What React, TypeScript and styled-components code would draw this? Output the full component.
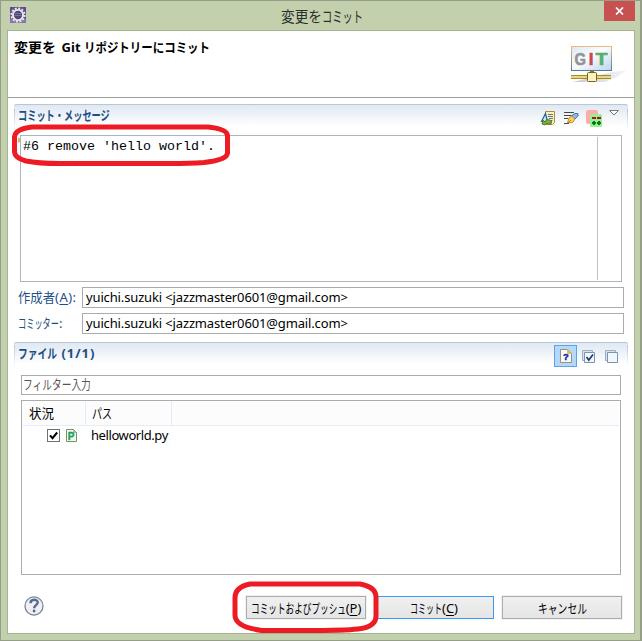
import React from "react";
import styled, { createGlobalStyle } from "styled-components";

const GlobalStyle = createGlobalStyle`
  * { box-sizing: border-box; }
  body { margin: 0; overflow: hidden; }
`;

const Frame = styled.div`
  position: relative;
  width: 642px;
  height: 641px;
  display: flex;
  flex-direction: column;
  background: #c3d0ad;
  border: 1px solid #959e86;
  border-right-width: 2px;
  font: 13px/18px "Noto Sans", "Noto Sans CJK JP", sans-serif;
  color: #000;
`;

const TitleBar = styled.header`
  height: 29px;
  flex: none;
  display: grid;
  grid-template-columns: 48px 1fr 48px;
  padding-left: 6px;
  svg { display: block; }
`;

const AppIcon = styled.div`
  padding: 6px 0 0 3px;
`;

const Title = styled.h1`
  margin: 0;
  padding: 4px 0 0 226px;
  font-size: 15px;
  line-height: 22px;
  font-weight: 400;
  color: #2a2f2a;
`;

const CloseButton = styled.button`
  width: 31px;
  height: 20px;
  margin-left: 12px;
  padding: 0;
  border: 0;
  background: #c75050;
  display: grid;
  place-items: center;
  justify-self: start;
`;

const Client = styled.main`
  width: 628px;
  height: 604px;
  margin-left: 6px;
  display: flex;
  flex-direction: column;
  background: #fff;
  border: 1px solid #a7b491;
`;

const Banner = styled.div`
  height: 67px;
  flex: none;
  display: flex;
  justify-content: space-between;
  border-bottom: 1px solid #a0a0a0;
`;

const BannerTitle = styled.h2`
  margin: 6px 0 0 6px;
  font-size: 13px;
  line-height: 20px;
  font-weight: 700;
`;

const BannerArt = styled.div`
  padding: 13px 6px 0 0;
`;

const SectionBar = styled.div<{ $top: number; $h: number }>`
  height: ${(p) => p.$h}px;
  flex: none;
  margin: ${(p) => p.$top}px 5px 0 5px;
  display: flex;
  justify-content: space-between;
  border: 1px solid transparent;
  border-top-color: #b5c7d9;
  border-bottom: 0;
  border-radius: 4px 4px 0 0;
  background:
    linear-gradient(#b5c7d9, #fff) left / 1px 22px no-repeat,
    linear-gradient(#b5c7d9, #fff) right / 1px 22px no-repeat,
    linear-gradient(#e0e8f2, #fff 21px) no-repeat;
`;

const SectionTitle = styled.h3`
  margin: 0;
  padding-left: 4px;
  font-size: 13px;
  line-height: 19px;
  font-weight: 700;
  color: #1c4f86;
`;

const Tools = styled.div<{ $gap: number; $right: number; $top: number }>`
  display: flex;
  align-items: flex-start;
  gap: ${(p) => p.$gap}px;
  padding: ${(p) => p.$top}px ${(p) => p.$right}px 0 0;
  svg { display: block; }
`;

const ToggleButton = styled.div`
  width: 23px;
  height: 22px;
  display: grid;
  place-items: center;
  border: 1px solid #5ba2e6;
  background: #b5d7f8;
  margin-right: 1px;
`;

const MessageBox = styled.div`
  width: 602px;
  height: 147px;
  flex: none;
  margin: 0 0 0 12px;
  padding: 1px 23px 1px 2px;
  border: 1px solid #abb5c0;
  display: flex;
`;

const MessageText = styled.div`
  flex: 1;
  padding-top: 1px;
  border-right: 1px solid #c0c0c0;
  font: 13.33px/18px "Liberation Mono", monospace;
  white-space: pre;
`;

const Field = styled.div<{ $top: number }>`
  display: grid;
  grid-template-columns: 64px 542px;
  flex: none;
  height: 21px;
  margin: ${(p) => p.$top}px 0 0 10px;
`;

const FieldLabel = styled.label`
  color: #1c4f86;
  line-height: 20px;
  white-space: nowrap;
`;

const FieldValue = styled.div`
  border: 1px solid #ababab;
  padding-left: 3px;
  line-height: 19px;
  font-size: 13px;
  white-space: nowrap;
`;

const FilterBox = styled.div`
  width: 600px;
  height: 20px;
  flex: none;
  margin: 6px 0 0 13px;
  border: 1px solid #ababab;
  padding-left: 1px;
  line-height: 16px;
  color: #555;
`;

const Table = styled.div`
  width: 600px;
  height: 175px;
  flex: none;
  margin: 5px 0 0 13px;
  padding: 1px;
  border: 1px solid #a9acb3;
`;

const TableHead = styled.div`
  display: grid;
  grid-template-columns: 63px 86px 1fr;
  height: 24px;
  border-bottom: 1px solid #e4edf9;
  background: #fcfcfc;
`;

const HeadCell = styled.div`
  padding-left: 6px;
  line-height: 22px;
  border-right: 1px solid #e1ecf9;
  &:last-child { border-right: 0; }
`;

const Row = styled.div`
  display: grid;
  grid-template-columns: 19px 25px 1fr;
  padding: 0 0 1px 24px;
  height: 18px;
  line-height: 16px;
  align-items: center;
  svg { display: block; margin-top: 1px; }
`;

const Footer = styled.footer`
  display: flex;
  align-items: flex-start;
  padding: 21px 0 0 16px;
  flex: 1;
`;

const Buttons = styled.div`
  display: flex;
  gap: 8px;
  margin-left: 202px;
`;

const PushButton = styled.button<{ $primary?: boolean }>`
  width: 120px;
  height: 23px;
  padding: 0;
  display: flex;
  align-items: center;
  justify-content: center;
  border: 1px solid ${(p) => (p.$primary ? "#3c98f0" : "#acacac")};
  box-shadow: ${(p) => (p.$primary ? "none" : "0 0 0 1px #f2f2f2")};
  background: linear-gradient(#f0f0f0, #e5e5e5);
  font: 13px/20px "Noto Sans", "Noto Sans CJK JP", sans-serif;
  color: #000;
  white-space: nowrap;
`;

/* Narrow UI lettering: squeezes full-width glyphs into a given width. */
const Narrow = styled.span<{ $w: number; $scale: number }>`
  display: inline-block;
  width: ${(p) => p.$w}px;
  white-space: nowrap;
  text-align: left;
  font-family: "Noto Sans CJK JP", sans-serif;
  line-height: inherit;
  vertical-align: baseline;
  transform: scaleX(${(p) => p.$scale});
  transform-origin: 0 50%;
`;

const Latin = styled.span<{ $ls?: number; $left?: number }>`
  letter-spacing: ${(p) => p.$ls ?? 0}px;
  margin-left: ${(p) => p.$left ?? 0}px;
`;

const Key = styled.span`
  text-decoration: underline;
  text-underline-offset: 2px;
`;

const Overlay = styled.svg`
  position: absolute;
  left: -1px;
  top: -1px;
  pointer-events: none;
`;

function Kana({ text, w, size = 13 }: { text: string; w: number; size?: number }) {
  return (
    <Narrow $w={w} $scale={w / (text.length * size)}>
      {text}
    </Narrow>
  );
}

const GearIcon = () => (
  <svg width="16" height="16" viewBox="0 0 16 16">
    <rect width="16" height="16" fill="#604b91" />
    <path d="M0 12h16v4H0z" fill="#8775b0" />
    <circle cx="8" cy="8" r="6.6" fill="none" stroke="#e8e6e4" strokeWidth="2" strokeDasharray="2 1.455" />
    <circle cx="8" cy="8" r="5.1" fill="#4d4878" stroke="#e8e6e4" strokeWidth="1.9" />
    <path d="M4.500 6.5h7M4.300 8.5h7.400" stroke="#8580a6" strokeWidth=".8" />
  </svg>
);

const GitArt = () => (
  <svg width="58" height="42" viewBox="0 0 58 42">
    <defs>
      <linearGradient id="board" x2="1" y2="1">
        <stop offset="0" stopColor="#dbe7f4" />
        <stop offset=".45" stopColor="#fafcff" />
        <stop offset="1" stopColor="#bcd3ec" />
      </linearGradient>
      <linearGradient id="edge" x2="0" y2="1">
        <stop offset="0" stopColor="#edbb82" />
        <stop offset="1" stopColor="#537d91" />
      </linearGradient>
      <linearGradient id="shade">
        <stop offset="0" stopColor="#bcb8c6" />
        <stop offset="1" stopColor="#f4f3f7" />
      </linearGradient>
    </defs>
    <path d="M3 38L42 28l15-2-10 7-12 5z" fill="url(#shade)" opacity=".8" />
    <rect x="1.5" y="2.5" width="40" height="24" fill="url(#board)" stroke="url(#edge)" />
    <g fontFamily="Liberation Sans" fontWeight="700" fontSize="17" strokeWidth=".6">
      <text x="4.500" y="21" fill="#949494" stroke="#949494" textLength="11.500" lengthAdjust="spacingAndGlyphs">G</text>
      <text x="18.700" y="21" fill="#c44b50" stroke="#c44b50">I</text>
      <text x="25.500" y="21" fill="#58ad68" stroke="#58ad68" textLength="12" lengthAdjust="spacingAndGlyphs">T</text>
    </g>
    <path d="M20 27h4v3h-4z" fill="#8c7a29" />
    <path d="M1 31h40v4H1z" fill="#ead878" />
    <path d="M1 31.5h40M1 34.5h40" stroke="#a58c2e" />
    <rect x="17.5" y="28.5" width="9" height="9" rx="1" fill="#fff2bd" stroke="#79631c" />
  </svg>
);

const AmendIcon = () => (
  <svg width="16" height="16" viewBox="0 0 16 16">
    <path d="M5.5 1.5h9v11l-2 2h-7z" fill="#fff1b8" stroke="#b58b31" />
    <path d="M8 4.5h5M8 6.5h5M9 8.5h4" stroke="#56759d" />
    <path d="M1.5 11.5l4-8 2 8z" fill="#c9e7fb" stroke="#20619c" strokeWidth="1.2" />
    <path d="M2 14l1-4 2 2c1-3 4-3 6-1l1-1-1 4H8l-1-1-2 2z" fill="#7aae35" stroke="#37701f" strokeWidth=".8" />
  </svg>
);

const SignIcon = () => (
  <svg width="16" height="16" viewBox="0 0 16 16">
    <path d="M1 2.5h10M1 5.5h9M1 8.5h4M1 13.5h5" stroke="#454545" />
    <path d="M8 6l4-2.500h3V6l-4 4z" fill="#8bb7ec" stroke="#4978b4" />
    <path d="M4.500 13l1.500-5 2.500-2 3.500 3-2.500 3.500z" fill="#ffd25c" stroke="#c58a2b" />
    <path d="M5 13l3-3" stroke="#7b642c" strokeWidth=".7" />
  </svg>
);

const ChangeIdIcon = () => (
  <svg width="16" height="17" viewBox="0 0 16 17">
    <rect x="0" y="0" width="12" height="14" rx="2.500" fill="#ffabab" />
    <rect x="4" y="4" width="12" height="13" rx="1.500" fill="#93f193" />
    <path d="M6 7h4v2H6zM11 7h4v2h-4z" fill="#b30f1d" />
    <path d="M6 12h4v2H6zM7 11h2v4H7zM11 12h4v2h-4zM12 11h2v4h-2z" fill="#087b14" />
  </svg>
);

const MenuIcon = () => (
  <svg width="10" height="6" viewBox="0 0 10 6">
    <path d="M.5.5h9L5 5z" fill="#fff" stroke="#777" />
  </svg>
);

const UntrackedIcon = () => (
  <svg width="12" height="14" viewBox="0 0 12 14">
    <path d="M.5.500h7l4 4v9H.5z" fill="#f5fbfc" stroke="#9a9274" />
    <path d="M7 0l5 5H7z" fill="#e0bd5d" />
    <text x="3" y="11" fontFamily="Liberation Sans" fontWeight="700" fontSize="9.500" fill="#0c25a0" stroke="#0c25a0" strokeWidth=".4">?</text>
  </svg>
);

const StackIcon = ({ checked }: { checked?: boolean }) => (
  <svg width="13" height="13" viewBox="0 0 13 13">
    <path d="M.5.5h10v10H.5z" fill="#d9e3ed" stroke="#9daec4" />
    <path d="M2.500 2.500h10v10h-10z" fill="#f0f8ff" stroke="#7d91b0" />
    {checked && <path d="M4.500 7l2.300 3L11 4.500" fill="none" stroke="#243b5d" strokeWidth="1.700" />}
  </svg>
);

const CheckIcon = () => (
  <svg width="13" height="13" viewBox="0 0 13 13">
    <rect x=".5" y=".5" width="12" height="12" fill="#fff" stroke="#707070" />
    <path d="M3 6.300l2.500 2.900L10.200 3.500" fill="none" stroke="#000" strokeWidth="2" />
  </svg>
);

const PyIcon = () => (
  <svg width="11" height="13" viewBox="0 0 11 13">
    <path d="M.5.5h7l3 3v9H.5z" fill="#f4faec" stroke="#77936d" />
    <path d="M7.500.5v3h3z" fill="#b9c7a0" stroke="#77936d" strokeWidth=".5" />
    <text x="1.800" y="10.500" fontFamily="Liberation Sans" fontWeight="700" fontSize="10" fill="#18a05c" stroke="#18a05c" strokeWidth=".3">P</text>
  </svg>
);

const HelpIcon = () => (
  <svg width="20" height="20" viewBox="0 0 21 21">
    <circle cx="10.500" cy="10.500" r="9.500" fill="#f0f0f0" stroke="#73829e" strokeWidth="1.300" />
    <path d="M6.800 7.700c0-5 7.600-4.800 7.600-.9 0 2.700-3.800 2.900-3.800 6" fill="none" stroke="#526a94" strokeWidth="2.500" />
    <circle cx="10.600" cy="15.800" r="1.500" fill="#526a94" />
  </svg>
);

const PERSON = "yuichi.suzuki <jazzmaster0601@gmail.com>";

export default function App() {
  return (
    <>
      <GlobalStyle />
      <Frame>
        <TitleBar>
          <AppIcon><GearIcon /></AppIcon>
          <Title>
            <Kana text="変更を" w={41} size={15} />
            <Kana text="コミット" w={41} size={15} />
          </Title>
          <CloseButton aria-label="閉じる">
            <svg width="9" height="8" viewBox="0 0 9 8">
              <path d="M1 .5l7 7M8 .5l-7 7" stroke="#fff" strokeWidth="1.700" />
            </svg>
          </CloseButton>
        </TitleBar>
        <Client>
          <Banner>
            <BannerTitle>
              <Kana text="変更を" w={42} />
              <Latin $ls={0.1} $left={2}> Git </Latin>
              <Kana text="リポジトリーにコミット" w={126} />
            </BannerTitle>
            <BannerArt><GitArt /></BannerArt>
          </Banner>

          <SectionBar $top={6} $h={31}>
            <SectionTitle><Kana text="コミット・メッセージ" w={92} /></SectionTitle>
            <Tools $gap={7} $right={9} $top={5}>
              <AmendIcon />
              <SignIcon />
              <ChangeIdIcon />
              <MenuIcon />
            </Tools>
          </SectionBar>
          <MessageBox>
            <MessageText>#6 remove 'hello world'.</MessageText>
          </MessageBox>
          <Field $top={5}>
            <FieldLabel>
              <Kana text="作成者" w={37} />
              <Latin $ls={0.5}>(<Key>A</Key>):</Latin>
            </FieldLabel>
            <FieldValue><Latin $ls={-0.14}>{PERSON}</Latin></FieldValue>
          </Field>
          <Field $top={5}>
            <FieldLabel><Kana text="コミッター" w={41} />:</FieldLabel>
            <FieldValue><Latin $ls={-0.14}>{PERSON}</Latin></FieldValue>
          </Field>

          <SectionBar $top={8} $h={27}>
            <SectionTitle>
              <Kana text="ファイル" w={39} />
              <Latin $ls={1}> (1/1)</Latin>
            </SectionTitle>
            <Tools $gap={4} $right={9} $top={2}>
              <ToggleButton><UntrackedIcon /></ToggleButton>
              <Tools $gap={10} $right={1} $top={5}>
                <StackIcon checked />
                <StackIcon />
              </Tools>
            </Tools>
          </SectionBar>
          <FilterBox><Kana text="フィルター入力" w={68} /></FilterBox>
          <Table>
            <TableHead>
              <HeadCell><Kana text="状況" w={25} /></HeadCell>
              <HeadCell><Kana text="パス" w={20} /></HeadCell>
              <HeadCell />
            </TableHead>
            <Row>
              <CheckIcon />
              <PyIcon />
              <Latin $ls={-0.42}>helloworld.py</Latin>
            </Row>
          </Table>
          <Footer>
            <HelpIcon />
            <Buttons>
              <PushButton>
                <Kana text="コミットおよびプッシュ" w={95} />(<Key>P</Key>)
              </PushButton>
              <PushButton $primary>
                <Kana text="コミット" w={32} />(<Key>C</Key>)
              </PushButton>
              <PushButton><Kana text="キャンセル" w={49} /></PushButton>
            </Buttons>
          </Footer>
        </Client>
        <Overlay width="642" height="641" viewBox="0 0 642 641" fill="none" stroke="#ed1c24">
          <path d="M18.500 138q1.500 1 0 4.500" stroke="#e39a3b" strokeWidth="1.500" />
          <path d="M32 127H208Q227.500 129 227.500 136V153Q227 160 204 162.500Q190 163.500 170 163.500H60Q38 163.500 26 161Q15 158 14.500 152V137Q15 129 32 127Z" strokeWidth="5" />
          <path d="M250 584H360Q376 587 376 597V616Q376 627 358 629Q345 630.500 305 630.500H262Q235 627 235 615V598Q235 587 250 584Z" strokeWidth="5" />
        </Overlay>
      </Frame>
    </>
  );
}
